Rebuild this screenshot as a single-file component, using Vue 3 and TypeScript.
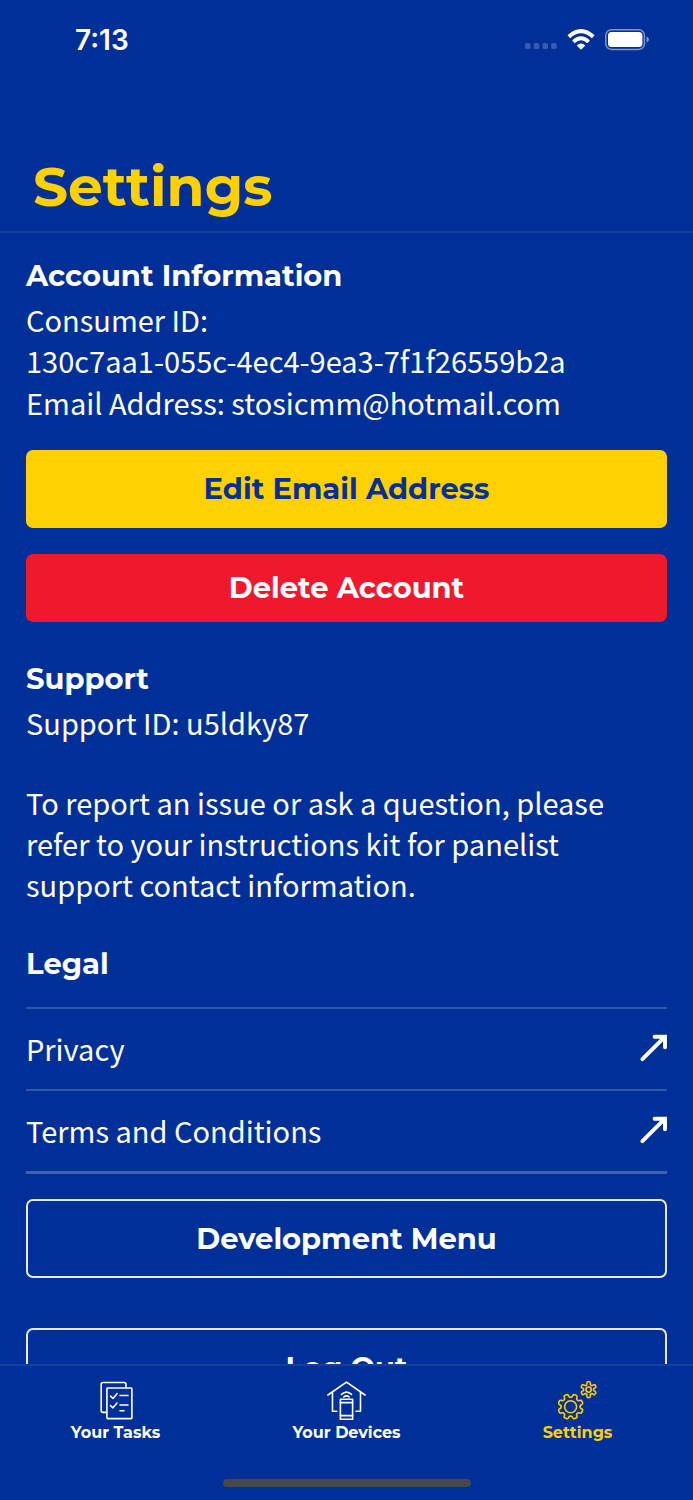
<script setup lang="ts">
const legalLinks: string[] = ['Privacy', 'Terms and Conditions']

function gearPath(
  cx: number,
  cy: number,
  teeth: number,
  outer: number,
  inner: number,
  turn: number,
): string {
  const step = (Math.PI * 2) / teeth
  const depth = outer - inner
  const point = (radius: number, angle: number): string =>
    `${(cx + radius * Math.sin(angle)).toFixed(2)} ${(cy - radius * Math.cos(angle)).toFixed(2)}`
  const parts: string[] = []
  for (let i = 0; i < teeth; i++) {
    const a = (i + turn) * step
    parts.push(
      `${i === 0 ? 'M' : 'L'}${point(outer, a - step * 0.13)}`,
      `L${point(outer, a + step * 0.13)}`,
      `Q${point(outer, a + step * 0.21)} ${point(inner + depth * 0.6, a + step * 0.25)}`,
      `Q${point(inner - depth * 0.2, a + step * 0.34)} ${point(inner, a + step * 0.5)}`,
      `Q${point(inner - depth * 0.2, a + step * 0.66)} ${point(inner + depth * 0.6, a + step * 0.75)}`,
      `Q${point(outer, a + step * 0.79)} ${point(outer, a + step * 0.87)}`,
    )
  }
  return parts.join('') + 'Z'
}

const largeGear = gearPath(12.6, 26.7, 8, 12.6, 9.6, 0.5)
const smallGear = gearPath(30.6, 9.6, 6, 7.9, 5, 0)
</script>

<template>
  <div class="screen">
    <div class="status">
      <span class="time">7:13</span>
      <div class="indicators">
        <svg class="dots" width="32" height="6" viewBox="0 0 32 6" aria-hidden="true">
          <rect v-for="n in 4" :key="n" :x="(n - 1) * 8.7" y="0" width="5.6" height="6" rx="1.6" />
        </svg>
        <svg width="28" height="22" viewBox="0 0 28 22" aria-hidden="true">
          <g fill="none" stroke="#fff" stroke-width="3.9">
            <path d="M1.8 7.7Q14-3.5 26.2 7.7" />
            <path d="M6.4 12.8Q14 5.7 21.6 12.8" />
          </g>
          <path d="M9.7 16.4Q14 12.8 18.3 16.4L14.6 20.3Q14 20.8 13.4 20.3Z" fill="#fff" />
        </svg>
        <svg width="44" height="22" viewBox="0 0 44 22" aria-hidden="true">
          <rect x="0.8" y="0.8" width="38.6" height="19.6" rx="5.5" fill="none" stroke="#7f96cb" stroke-width="1.5" />
          <rect x="3" y="3" width="34.4" height="15" rx="3.5" fill="#fff" />
          <path d="M41.5 7.5Q44 8.5 44 10.6T41.5 13.7Z" fill="#7f96cb" />
        </svg>
      </div>
    </div>

    <header class="header">
      <h1>Settings</h1>
    </header>

    <main class="content">
      <section>
        <h2>Account Information</h2>
        <p>Consumer ID:<br />130c7aa1-055c-4ec4-9ea3-7f1f26559b2a</p>
        <p class="email">Email Address: stosicmm@hotmail.com</p>
        <button type="button" class="button edit">Edit Email Address</button>
        <button type="button" class="button delete">Delete Account</button>
      </section>

      <section class="support">
        <h2>Support</h2>
        <p>Support ID: u5ldky87</p>
        <p class="note">
          To report an issue or ask a question, please refer to your instructions kit for panelist
          support contact information.
        </p>
      </section>

      <section class="legal">
        <h2>Legal</h2>
        <nav class="links" aria-label="Legal">
          <a v-for="link in legalLinks" :key="link" href="#">
            <span>{{ link }}</span>
            <svg width="28" height="28" viewBox="0 0 28 28" aria-hidden="true">
              <path
                d="M3.4 25.2L25 3.6M15.6 2.8H26V13.2"
                fill="none"
                stroke="#fff"
                stroke-width="3.9"
                stroke-linecap="round"
              />
              <path d="M20 1.4H28V9Z" fill="#fff" />
            </svg>
          </a>
        </nav>
      </section>

      <button type="button" class="button outline">Development Menu</button>
      <button type="button" class="button outline logout">Log Out</button>
    </main>

    <nav class="tabs" aria-label="Main">
      <div class="tab-row">
        <a href="#" class="tab">
          <svg width="40" height="40" viewBox="0 0 40 40" aria-hidden="true">
            <g fill="none" stroke="#fff" stroke-width="1.6" stroke-linecap="round" stroke-linejoin="round">
              <path d="M10.5 32.4H7Q5.2 32.4 5.2 30.6V4.3Q5.2 2.5 7 2.5H28Q30 2.5 30 4.5V8" />
              <rect x="10.9" y="8" width="25" height="30.6" rx="0.8" />
              <path d="M14.5 16.2L17 18.4L21 13.7M14.5 25.6L17 27.8L21 23.1M24 15.5H32M24 25H32M24 30.7H28" />
            </g>
          </svg>
          <span>Your Tasks</span>
        </a>
        <a href="#" class="tab">
          <svg width="40" height="40" viewBox="0 0 40 40" aria-hidden="true">
            <g fill="none" stroke="#fff" stroke-width="1.6" stroke-linecap="round" stroke-linejoin="round">
              <path d="M0.9 15L19.5 2.2L38 15M5.5 12.2V31.2H9.8M33.5 12.2V31.2H29" />
              <path d="M14.5 14.4Q19.5 9.8 24.5 14.4M16.8 17Q19.5 14.6 22.2 17" />
              <rect x="13.4" y="19.3" width="12.2" height="20" />
              <path d="M13.4 22.6H25.6M13.4 35.6H25.6" />
            </g>
          </svg>
          <span>Your Devices</span>
        </a>
        <a href="#" class="tab active" aria-current="page">
          <svg width="40" height="40" viewBox="0 0 40 40" aria-hidden="true">
            <g fill="none" stroke="#ffd100" stroke-width="1.6" stroke-linejoin="round">
              <path :d="largeGear" />
              <circle cx="12.6" cy="26.7" r="6" />
              <path :d="smallGear" />
              <circle cx="30.6" cy="9.6" r="2.6" />
            </g>
          </svg>
          <span>Settings</span>
        </a>
      </div>
      <div class="home-bar"></div>
    </nav>
  </div>
</template>

<style>
body {
  margin: 0;
  background: #002f97;
}
</style>

<style scoped>
.screen {
  display: flex;
  flex-direction: column;
  height: 100vh;
  overflow: hidden;
  background: #002f97;
  color: #fff;
  font-family: Montserrat, Inter, "Liberation Sans", sans-serif;
}

.status {
  display: flex;
  flex-shrink: 0;
  align-items: center;
  justify-content: space-between;
  height: 79px;
  padding: 0 44px 0 75px;
  box-sizing: border-box;
}

.time {
  font-family: Inter, sans-serif;
  font-size: 28px;
  font-weight: 600;
}

.indicators {
  display: flex;
  align-items: center;
  gap: 10px;
}

.dots {
  margin-top: 13px;
  fill: #375bae;
}

.header {
  flex-shrink: 0;
  padding: 73px 33px 9px;
  border-bottom: 2px solid #173f9e;
}

h1 {
  margin: 0;
  font-size: 55px;
  font-weight: 700;
  line-height: 70px;
  color: #ffd100;
}

.content {
  flex: 1;
  min-height: 0;
  overflow: hidden;
  padding: 23px 26px 0;
}

h2 {
  margin: 0 0 3px;
  font-size: 29px;
  font-weight: 700;
  line-height: 40px;
}

p,
.links a {
  margin: 0;
  font-family: "Source Sans Pro", "Noto Sans CJK SC", sans-serif;
  font-size: 29px;
  font-weight: 400;
  line-height: 41px;
}

.button {
  display: block;
  width: 100%;
  height: 78px;
  padding: 0 0 1px;
  border: 0;
  border-radius: 7px;
  box-sizing: border-box;
  color: #fff;
  font-family: inherit;
  font-size: 29px;
  font-weight: 700;
}

.email {
  margin-top: 1px;
}

.edit {
  margin-top: 27px;
  background: #ffd100;
  color: #002f97;
}

.delete {
  height: 68px;
  margin-top: 26px;
  background: #f0182d;
}

.support {
  margin-top: 37px;
}

.note {
  margin-top: 39px;
}

.legal {
  margin-top: 39px;
}

.links {
  margin-top: 23px;
  border-bottom: 3px solid #4062b0;
}

.links a {
  display: flex;
  align-items: center;
  justify-content: space-between;
  height: 78px;
  padding-bottom: 2px;
  border-top: 2px solid #3055a9;
  color: inherit;
  text-decoration: none;
}

.outline {
  height: 79px;
  margin-top: 25px;
  border: 2px solid #e5eaf5;
  background: transparent;
}

.logout {
  margin-top: 50px;
}

.tabs {
  flex-shrink: 0;
  height: 136px;
  padding-top: 14px;
  border-top: 2px solid #173f9e;
  box-sizing: border-box;
}

.tab-row {
  display: grid;
  grid-template-columns: repeat(3, 1fr);
}

.tab {
  display: flex;
  flex-direction: column;
  align-items: center;
  color: #fff;
  font-size: 16px;
  font-weight: 700;
  line-height: 26px;
  text-decoration: none;
}

.active {
  color: #ffd100;
}

.home-bar {
  width: 248px;
  height: 8px;
  margin: 33px auto 0;
  border-radius: 4px;
  background: #48484a;
}
</style>
